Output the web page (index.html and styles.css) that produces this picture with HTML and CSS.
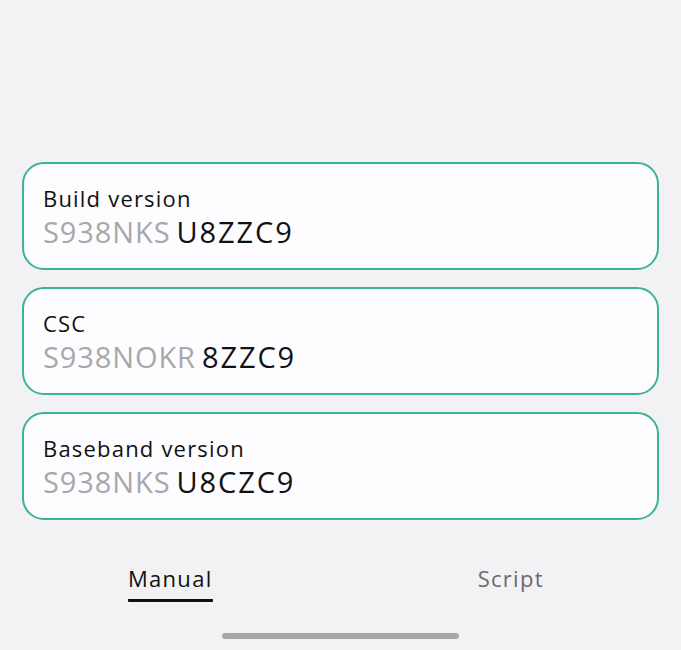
FILE: index.html
```html
<!DOCTYPE html>
<html>
<head>
<meta charset="utf-8">
<link rel="stylesheet" href="styles.css">
</head>
<body>
<main class="screen">
  <section class="cards">
    <div class="card">
      <div class="label">Build version</div>
      <div class="value"><span class="dim">S938NKS</span><span class="strong">U8ZZC9</span></div>
    </div>
    <div class="card">
      <div class="label">CSC</div>
      <div class="value"><span class="dim">S938NOKR</span><span class="strong">8ZZC9</span></div>
    </div>
    <div class="card">
      <div class="label">Baseband version</div>
      <div class="value"><span class="dim">S938NKS</span><span class="strong">U8CZC9</span></div>
    </div>
  </section>
  <nav class="tabs">
    <div class="tab active"><span class="tab-text">Manual</span></div>
    <div class="tab"><span class="tab-text">Script</span></div>
  </nav>
  <div class="home"><div class="home-bar"></div></div>
</main>
</body>
</html>
```
FILE: styles.css
```css
html, body {
  margin: 0;
  padding: 0;
  background: #f2f2f4;
}
body {
  font-family: "Open Sans", Roboto, sans-serif;
  color: #111;
}
.screen {
  width: 681px;
  height: 650px;
  display: flex;
  flex-direction: column;
}
.cards {
  padding: 162px 22px 0;
  display: flex;
  flex-direction: column;
  gap: 17px;
}
.card {
  box-sizing: border-box;
  height: 108px;
  border: 2px solid #3cb391;
  border-radius: 22px;
  background: #fdfcff;
  padding: 20px 19px 0 19px;
}
.label {
  font-size: 22px;
  line-height: 28px;
  letter-spacing: 1.2px;
  color: #111;
}
.value {
  font-size: 29px;
  line-height: 38px;
  margin-top: 1px;
  display: flex;
  gap: 6px;
}
.dim {
  color: #a8a8aa;
  letter-spacing: 0.9px;
}
.strong {
  color: #111;
  letter-spacing: 1.9px;
}
.tabs {
  display: flex;
  margin-top: 43px;
}
.tab {
  flex: 1;
  display: flex;
  justify-content: center;
}
.tab-text {
  font-size: 22px;
  line-height: 30px;
  letter-spacing: 1.3px;
  color: #6a6a6c;
  padding-bottom: 6px;
  border-bottom: 3px solid transparent;
  border-radius: 1px;
}
.tab.active .tab-text {
  color: #111;
  border-bottom-color: #111;
}
.home {
  display: flex;
  justify-content: center;
  margin-top: 31px;
}
.home-bar {
  width: 237px;
  height: 6px;
  border-radius: 3px;
  background: #a7a7a9;
}
```
